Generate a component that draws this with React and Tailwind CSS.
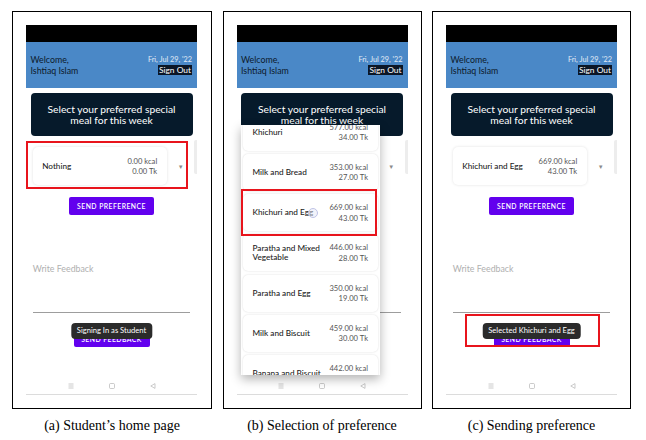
import { Fragment } from "react";

const meals = [
  { name: "Khichuri", kcal: "577.00 kcal", tk: "34.00 Tk" },
  { name: "Milk and Bread", kcal: "353.00 kcal", tk: "27.00 Tk" },
  { name: "Khichuri and Egg", kcal: "669.00 kcal", tk: "43.00 Tk", picked: true },
  { name: "Paratha and Mixed Vegetable", kcal: "446.00 kcal", tk: "28.00 Tk" },
  { name: "Paratha and Egg", kcal: "350.00 kcal", tk: "19.00 Tk" },
  { name: "Milk and Biscuit", kcal: "459.00 kcal", tk: "30.00 Tk" },
  { name: "Banana and Biscuit", kcal: "442.00 kcal", tk: "25.00 Tk" }
];

function NavBar() {
  return (
    <div className="mt-auto flex h-[18px] items-center justify-center gap-[35px] border-b-[1.5px] border-[#dcdcdc]">
      {/* recents */}
      <svg width="6" height="6" viewBox="0 0 6 6" fill="none" stroke="#b5b5b5" strokeWidth="0.7">
        <path d="M0.5 1h5M0.5 3h5M0.5 5h5" />
      </svg>
      {/* home */}
      <svg width="6" height="6" viewBox="0 0 6 6" fill="none" stroke="#b5b5b5" strokeWidth="0.7">
        <rect x="0.5" y="0.5" width="5" height="5" rx="1" />
      </svg>
      {/* back */}
      <svg width="6" height="6" viewBox="0 0 6 6" fill="none" stroke="#b5b5b5" strokeWidth="0.7">
        <path d="M5 0.6v4.8L0.8 3z" strokeLinejoin="round" />
      </svg>
    </div>
  );
}

function MealText({ name, kcal, tk }) {
  return (
    <>
      <span className="max-w-[74px] text-[8.2px] font-medium leading-[9px] text-[#1c1c1c]">{name}</span>
      <div className="flex flex-col items-end text-[7.6px] leading-[10.5px] text-[#555]">
        <span>{kcal}</span>
        <span>{tk}</span>
      </div>
    </>
  );
}

function Dropdown() {
  return (
    <div className="absolute left-[4.5px] top-[100px] h-[250px] w-[138.5px] overflow-hidden bg-white shadow-[0_4px_10px_rgba(0,0,0,0.3)]">
      <div className="-mt-[11.5px] flex flex-col gap-[3.3px] px-[2px]">
        {meals.map((m) => (
          <div
            key={m.name}
            className="relative flex h-[37px] shrink-0 items-center justify-between rounded-[5px] bg-white pl-[9.5px] pr-[9.5px] shadow-[0_0_2px_rgba(0,0,0,0.15)]"
          >
            <MealText {...m} />
            {m.picked && (
              <div className="absolute left-[65px] top-[14px] h-[10px] w-[10px] rounded-full border-[0.7px] border-[#bfc3e6] bg-[#e6e8f5]/50" />
            )}
          </div>
        ))}
      </div>
      {/* highlight on the chosen row */}
      <div className="absolute left-0 top-[64px] h-[47px] w-[136px] border-2 border-[#e8141c]" />
    </div>
  );
}

function Phone({ meal, toast, markCard, markToast, open }) {
  return (
    <div className="relative flex h-[370px] w-[171px] flex-col bg-white font-['Lato',sans-serif]">
      <div className="h-[17px] bg-black" />
      <div className="flex h-[46px] items-center justify-between bg-[#4a88c7] pl-[4.5px] pr-[5px]">
        <div className="text-[8.8px] leading-[11px] text-[#0c1a2c]">
          <div>Welcome,</div>
          <div>Ishtiaq Islam</div>
        </div>
        <div className="flex flex-col items-end">
          <span className="text-[7.3px] leading-[10px] text-[#e1ebf6]">Fri, Jul 29, '22</span>
          <span className="bg-[#0b1626] px-[1px] text-[8.4px] leading-[10px] text-white">Sign Out</span>
        </div>
      </div>

      <div className="mx-[4.5px] mt-[5px] flex h-[43px] items-center justify-center rounded-[4px] bg-[#061a2b] text-center text-[10.3px] leading-[10.7px] text-white">
        Select your preferred special
        <br />
        meal for this week
      </div>

      <div className="relative mt-[11px] flex h-[38px] items-center">
        <div className="ml-[6.7px] flex h-[38px] w-[134px] items-center justify-between rounded-[5px] bg-white pl-[9.5px] pr-[9.5px] shadow-[0_0_3px_rgba(0,0,0,0.12)]">
          <MealText {...meal} />
        </div>
        <span className="ml-[11px] text-[6px] text-[#8a8a8a]">▼</span>
        <div className="absolute -top-[7px] right-0 h-[34px] w-[3px] rounded-l-[2px] bg-[#ededed]" />
        {markCard && (
          <div className="absolute -top-[6.5px] left-0 h-[48.5px] w-[161.5px] border-2 border-[#e8141c]" />
        )}
      </div>

      <button className="mx-auto mt-[12px] h-[18px] w-[85px] rounded-[2px] bg-[#6200ee] text-[6.8px] font-semibold tracking-[0.07em] text-white">
        SEND PREFERENCE
      </button>

      <div className="mx-[6.7px] mt-[49px] h-[49px] border-b border-[#9d9d9d] text-[8.8px] leading-[10px] text-[#b0b0b0]">
        Write Feedback
      </div>

      <button className="mx-auto mt-[19px] h-[15px] w-[76px] rounded-[2px] bg-[#6200ee] text-[6.8px] font-semibold tracking-[0.07em] text-white">
        SEND FEEDBACK
      </button>

      <NavBar />

      {toast && (
        <div className="absolute left-1/2 top-[297.5px] flex h-[16.5px] -translate-x-1/2 items-center whitespace-nowrap rounded-[4px] bg-[#2b2b2b] px-[6px] text-[7.6px] text-white">
          {toast}
        </div>
      )}
      {markToast && (
        <div className="absolute left-[19px] top-[288.5px] h-[33px] w-[135px] border-2 border-[#e8141c]" />
      )}
      {open && <Dropdown />}
    </div>
  );
}

const panels = [
  {
    caption: "(a) Student’s home page",
    w: "w-[200px]",
    phone: { meal: { name: "Nothing", kcal: "0.00 kcal", tk: "0.00 Tk" }, toast: "Signing In as Student", markCard: true }
  },
  {
    caption: "(b) Selection of preference",
    w: "w-[199px]",
    phone: { meal: { name: "Nothing", kcal: "0.00 kcal", tk: "0.00 Tk" }, open: true }
  },
  {
    caption: "(c) Sending preference",
    w: "w-[199px]",
    phone: {
      meal: { name: "Khichuri and Egg", kcal: "669.00 kcal", tk: "43.00 Tk" },
      toast: "Selected Khichuri and Egg",
      markToast: true
    }
  }
];

export default function App() {
  return (
    <div className="h-[440px] w-[646px] overflow-hidden bg-white">
      <div className="flex gap-[10.5px] pl-[12px] pt-[11px]">
        {panels.map((p) => (
          <div key={p.caption} className={`flex flex-col ${p.w}`}>
            <div className="h-[398px] border-[1.3px] border-black pl-[13px] pt-[13px]">
              <Phone {...p.phone} />
            </div>
            <div className="mt-[9px] text-center font-['Liberation_Serif',serif] text-[14px] leading-[16px] text-black">
              {p.caption}
            </div>
          </div>
        ))}
      </div>
    </div>
  );
}
